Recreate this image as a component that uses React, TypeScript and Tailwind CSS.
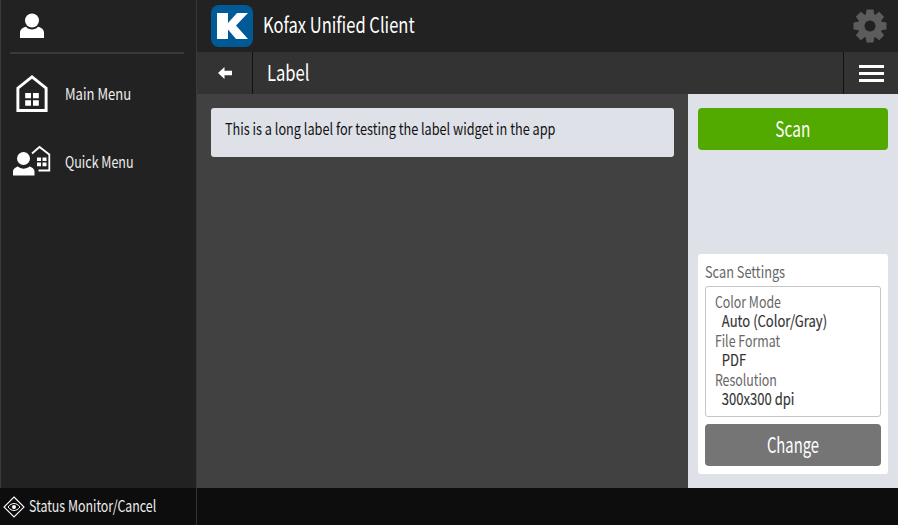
const font = { fontFamily: '"Noto Sans CJK JP", sans-serif' };

function Person({ className }: { className?: string }) {
  return (
    <svg viewBox="0 0 24 25" className={className} fill="currentColor">
      <circle cx="12" cy="7.5" r="7" />
      <path d="M0 25V19.500C0 16.500 3 14.600 6 13.800 7.500 15.600 9.600 16.600 12 16.600S16.500 15.600 18 13.800C21 14.600 24 16.500 24 19.500V25Z" />
    </svg>
  );
}

function HouseIcon() {
  return (
    <svg viewBox="0 0 32 38" className="h-[37px] w-[32px] text-white">
      <path d="M1.500 36.500V13.500L16 2 30.500 13.500V36.500Z" fill="none" stroke="currentColor" strokeWidth="3" />
      <path d="M9 18.500h6v5.500H9zM17 18.500h6v5.500h-6zM9 26h6v5.500H9zM17 26h6v5.500h-6z" fill="currentColor" />
    </svg>
  );
}

function QuickIcon() {
  return (
    <svg viewBox="0 0 38 32" className="h-[32px] w-[38px] text-white" fill="currentColor">
      <path d="M19 8.500 26.500 2 36.300 9.500V25.500H25.500" fill="none" stroke="currentColor" strokeWidth="1.800" />
      <path d="M24 12.500h4v3.600h-4zM29.500 12.500h4v3.600h-4zM24 17.600h4v3.600h-4zM29.500 17.600h4v3.600h-4z" />
      <circle cx="10.500" cy="13.500" r="6.500" />
      <path d="M0 30.500V26.500C0 24 2.600 22 5 21.500 6.500 22.900 8.600 23.700 10.500 23.700S15 22.900 16.500 21.500C19 22 21.500 24 21.500 26.500V30.500Z" />
    </svg>
  );
}

function KLogo() {
  return (
    <svg viewBox="0 0 42 42" className="h-[42px] w-[42px]">
      <rect width="42" height="42" rx="8" fill="#005a96" />
      <path d="M6 8H17V18L26 8H37L25 20.500 37 34H25L17 24.500V34H6Z" fill="#fff" />
    </svg>
  );
}

function Gear() {
  const teeth = [0, 45, 90, 135, 180, 225, 270, 315];
  return (
    <svg viewBox="0 0 34 34" className="h-[34px] w-[34px]" fill="#5c5c5c">
      {teeth.map((a) => (
        <path key={a} d="M13.500 0.500H20.500L21.500 8H12.500Z" transform={`rotate(${a} 17 17)`} />
      ))}
      <path fillRule="evenodd" d="M17 4.500a12.500 12.500 0 1 0 .01 0ZM17 11.500a5.500 5.500 0 1 1 -.01 0Z" />
    </svg>
  );
}

function EyeDiamond() {
  return (
    <svg viewBox="0 0 22 22" className="h-[22px] w-[22px] text-white" fill="none" stroke="currentColor">
      <path d="M11 1 21 11 11 21 1 11Z" strokeWidth="1.100" />
      <path d="M5 11C7 8.500 9 7.500 11 7.500S15 8.500 17 11C15 13.500 13 14.500 11 14.500S7 13.500 5 11Z" strokeWidth="1" />
      <circle cx="11" cy="11" r="2" fill="currentColor" stroke="none" />
    </svg>
  );
}

function Setting({ label, value }: { label: string; value: string }) {
  return (
    <div className="mb-[4px] flex flex-col gap-[3px]">
      <div className="h-[16px] origin-left scale-x-[0.773] whitespace-nowrap pl-[11.500px] text-[16px] leading-none text-[#666666]">
        {label}
      </div>
      <div className="h-[16px] origin-left scale-x-[0.814] whitespace-nowrap pl-[19.500px] text-[16px] leading-none text-[#333333] [-webkit-text-stroke:0.15px_#333333]">
        {value}
      </div>
    </div>
  );
}

export default function App() {
  return (
    <div className="flex h-[525px] w-[898px] flex-col overflow-hidden bg-[#0d0d0d]" style={font}>
      <div className="flex h-[488px] min-h-0">
        <aside className="flex w-[197px] shrink-0 flex-col border-x border-[#3a3a3a] bg-[#222222] pl-[9px] pr-[12px]">
          <div className="flex h-[54px] shrink-0 items-center border-b-2 border-[#3a3a3a] pl-[10px] pb-[2px] text-white">
            <Person className="h-[25px] w-[24px]" />
          </div>
          <div className="flex h-[78px] items-center pl-[6px]">
            <HouseIcon />
            <span className="ml-[17px] origin-left scale-x-[0.815] whitespace-nowrap text-[16px] leading-none text-[#eeeeee]">
              Main Menu
            </span>
          </div>
          <div className="mt-[4px] flex h-[50px] items-center pl-[3px]">
            <QuickIcon />
            <span className="ml-[14px] origin-left scale-x-[0.78] whitespace-nowrap text-[16px] leading-none text-[#eeeeee]">
              Quick Menu
            </span>
          </div>
        </aside>
        <main className="flex min-w-0 flex-1 flex-col">
          <header className="flex h-[52px] shrink-0 items-center bg-[#222222] pl-[14px] pr-[11px]">
            <KLogo />
            <span className="ml-[10px] origin-left -translate-y-[2px] scale-x-[0.787] whitespace-nowrap text-[21px] leading-none text-white">
              Kofax Unified Client
            </span>
            <span className="ml-auto">
              <Gear />
            </span>
          </header>
          <div className="flex h-[42px] shrink-0 items-stretch bg-[#333333]">
            <div className="flex w-[56px] items-center justify-center border-r border-[#111111] text-white">
              <svg viewBox="0 0 14 12" className="h-[12px] w-[14px]" fill="currentColor">
                <path d="M0 6 6.500 0V3.800H14V8.200H6.500V12Z" />
              </svg>
            </div>
            <span className="ml-[14px] origin-left -translate-y-[2px] self-center whitespace-nowrap scale-x-[0.754] text-[22px] leading-none text-white">
              Label
            </span>
            <div className="ml-auto flex w-[55px] flex-col items-center justify-center gap-[4px] border-l border-[#111111] pl-[1px]">
              <i className="block h-[3px] w-[25px] bg-white" />
              <i className="block h-[3px] w-[25px] bg-white" />
              <i className="block h-[3px] w-[25px] bg-white" />
            </div>
          </div>
          <div className="flex min-h-0 flex-1">
            <div className="w-[491px] shrink-0 bg-[#414141] p-[14px]">
              <div className="flex h-[49px] w-[463px] items-center rounded-[3px] bg-[#dfe1e9] pl-[14px] text-[#111111]">
                <span className="origin-left -translate-y-[5px] scale-x-[0.793] whitespace-nowrap text-[16px] leading-none">
                  This is a long label for testing the label widget in the app
                </span>
              </div>
            </div>
            <div className="flex flex-1 flex-col justify-between bg-[#dfe1e9] px-[10px] pb-[14px] pt-[14px]">
              <button className="flex h-[42px] items-center justify-center rounded-[4px] bg-[#52a900] text-white">
                <span className="-translate-y-[1px] scale-x-[0.733] text-[21px] leading-none">Scan</span>
              </button>
              <div className="flex h-[220px] flex-col rounded-[3px] bg-white px-[7px] pb-[8px] pt-[6px]">
                <div className="mb-[4px] origin-left scale-x-[0.797] whitespace-nowrap text-[16px] leading-[22px] text-[#666666]">
                  Scan Settings
                </div>
                <div className="flex h-[131px] flex-col rounded-[3px] border border-[#c6c6c6] pt-[6px]">
                  <Setting label="Color Mode" value="Auto (Color/Gray)" />
                  <Setting label="File Format" value="PDF" />
                  <Setting label="Resolution" value="300x300 dpi" />
                </div>
                <button className="mt-[7px] flex h-[42px] items-center justify-center rounded-[4px] bg-[#757575] text-white">
                  <span className="-translate-y-[1px] scale-x-[0.705] text-[21px] leading-none">Change</span>
                </button>
              </div>
            </div>
          </div>
        </main>
      </div>
      <footer className="flex h-[37px] shrink-0 items-center">
        <div className="flex h-full w-[197px] items-center border-r border-[#333333] pl-[3px]">
          <EyeDiamond />
          <span className="ml-[4px] origin-left -translate-y-[2px] scale-x-[0.773] whitespace-nowrap text-[16px] leading-none text-[#eeeeee]">
            Status Monitor/Cancel
          </span>
        </div>
      </footer>
    </div>
  );
}
